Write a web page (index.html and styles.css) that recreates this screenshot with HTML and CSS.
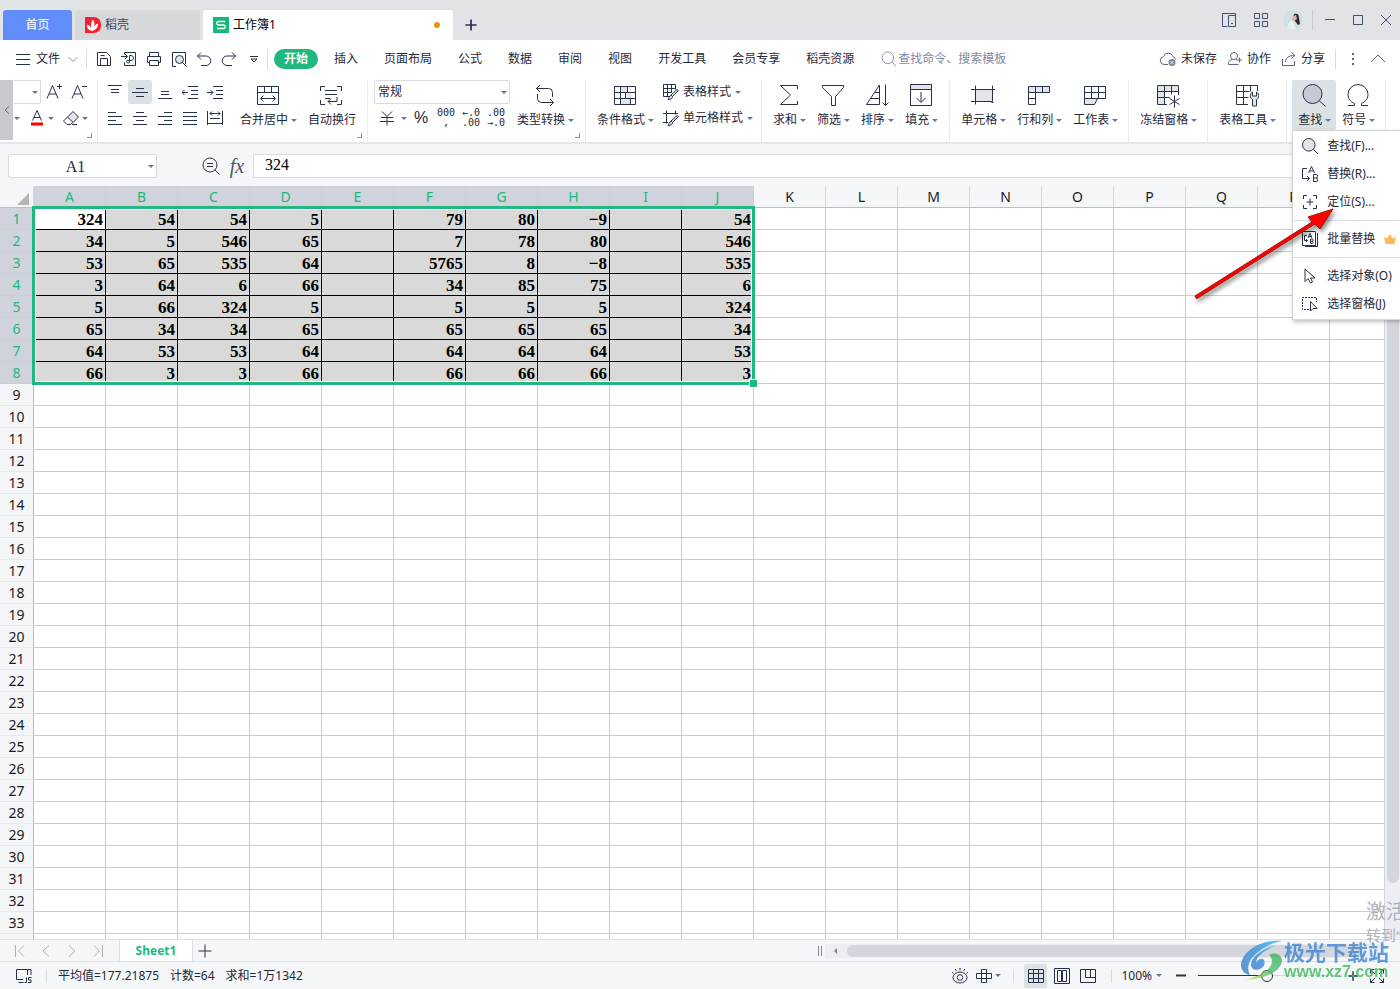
FILE: index.html
```html
<!DOCTYPE html>
<html lang="zh-CN">
<head>
<meta charset="utf-8">
<title>工作簿1</title>
<link rel="stylesheet" href="styles.css">
</head>
<body>
<svg class="sprite" aria-hidden="true">
  <symbol id="i-burger" viewBox="0 0 16 16"><path d="M1 3.500h14M1 8.500h14M1 13.500h14"/></symbol>
  <symbol id="i-chev" viewBox="0 0 12 12"><path d="M1.500 4l4.500 4.500 4.500-4.500"/></symbol>
  <symbol id="i-chevup" viewBox="0 0 16 16"><path d="M1 11l7-7 7 7"/></symbol>
  <symbol id="i-save" viewBox="0 0 16 16"><path d="M1.500 1.500h9l4 4v9h-13zM4.500 14.500v-7h7v7M4.500 4.500h4"/></symbol>
  <symbol id="i-export" viewBox="0 0 16 16"><path d="M3.500 3.500v-2h11v13h-11v-3M0 5.500h6M4 3l2.500 2.500L4 8M8.500 11V4.500h1.500a2.300 2.300 0 0 1 0 5H6a1.500 1.500 0 1 0 2.500 1.500"/></symbol>
  <symbol id="i-print" viewBox="0 0 16 16"><path d="M3.500 5V1.500h9V5M3.500 11.500h-2v-6h13v6h-2M3.500 9.500h9v5h-9z"/></symbol>
  <symbol id="i-preview" viewBox="0 0 16 16"><path d="M5 15.500H1.500v-14h13V13"/><circle cx="8.500" cy="8.500" r="4" class="tint"/><path d="M11.500 11.500l4 4"/></symbol>
  <symbol id="i-undo" viewBox="0 0 16 16"><path d="M5 1.500L1.500 5 5 8.500M1.500 5H10a4.700 4.700 0 0 1 0 9.500H5"/></symbol>
  <symbol id="i-redo" viewBox="0 0 16 16"><path d="M11 1.500L14.500 5 11 8.500M14.500 5H6a4.700 4.700 0 0 0 0 9.500h5"/></symbol>
  <symbol id="i-more" viewBox="0 0 10 10"><path d="M1 2.500h8M2 5l3 3 3-3z"/></symbol>
  <symbol id="i-search" viewBox="0 0 16 16"><circle cx="6.800" cy="6.800" r="5.800"/><path d="M11 11l4 4"/></symbol>
  <symbol id="i-searchf" viewBox="0 0 16 16"><circle cx="6.800" cy="6.800" r="6.300" class="tint"/><path d="M11.500 11.500l4.500 4.500"/></symbol>
  <symbol id="i-cloud" viewBox="0 0 18 16"><path d="M9 13.500H5a4 4 0 0 1-.5-7.900A5 5 0 0 1 14 5.500a4 4 0 0 1 2.400 3"/><circle cx="13" cy="11.500" r="3.500" class="dot"/><path class="white" d="M11.800 10.300l2.400 2.400M14.200 10.300l-2.400 2.400"/></symbol>
  <symbol id="i-user" viewBox="0 0 16 16"><circle cx="7" cy="5" r="3.500"/><path d="M5 8.500C2 9 1.500 11 1.500 13.500h10M9 8.500l1 .7M12.500 6.500v5M10 9h5"/></symbol>
  <symbol id="i-share" viewBox="0 0 16 16"><path d="M1.500 8v6.500h12V10M4.500 11c0-4 3-6.500 9-6.500M10.500 1.500l3.500 3-3.500 3"/></symbol>
  <symbol id="i-pane" viewBox="0 0 16 16"><path d="M6.500 14.500h-5v-13h13v2M7.500 3.500h7v11h-7zM10 11.500h2"/></symbol>
  <symbol id="i-four" viewBox="0 0 16 16"><path d="M1.500 1.500h5v5h-5zM9.500 1.500h5v5h-5zM1.500 9.500h5v5h-5zM9.500 9.500h5v5h-5z"/></symbol>
  <symbol id="i-min" viewBox="0 0 12 12"><path d="M1 5.500h10"/></symbol>
  <symbol id="i-max" viewBox="0 0 12 12"><path d="M1.500 1.500h9v9h-9z"/></symbol>
  <symbol id="i-close" viewBox="0 0 12 12"><path d="M1 1l10 10M11 1L1 11"/></symbol>
  <symbol id="i-plus" viewBox="0 0 14 14"><path d="M7 .5v13M.5 7h13"/></symbol>
  <symbol id="i-abig" viewBox="0 0 16 16"><path d="M1 14.500L6.500 1.500 12 14.500M3 10h7M13.500 0v5M11 2.500h5"/></symbol>
  <symbol id="i-asmall" viewBox="0 0 16 16"><path d="M1 14.500L6.500 1.500 12 14.500M3 10h7M11 2.500h5"/></symbol>
  <symbol id="i-acolor" viewBox="0 0 16 16"><path d="M3.500 10.500L8 .5l4.500 10M5 7.500h6"/><path class="red" d="M2 14h12"/></symbol>
  <symbol id="i-eraser" viewBox="0 0 16 16"><path class="tint" d="M4.500 7l5.500-5.500 5.500 5.500-5.500 5.500z"/><path d="M4.500 7L.5 11l3.500 3.500h3l3-2M9 14.500h5"/></symbol>
  <symbol id="i-top" viewBox="0 0 16 16"><path d="M1 1.500h14M4 5.500h8M4 8.500h8"/></symbol>
  <symbol id="i-mid" viewBox="0 0 16 16"><path d="M4 4.500h8M0 8.500h16M4 12.500h8"/></symbol>
  <symbol id="i-bot" viewBox="0 0 16 16"><path d="M4 7.500h8M4 10.500h8M1 14.500h14"/></symbol>
  <symbol id="i-outd" viewBox="0 0 16 16"><path d="M6 2.500h10M9 6.500h7M9 10.500h7M6 14.500h10M0 8.500h6M2.500 6L0 8.500 2.500 11"/></symbol>
  <symbol id="i-ind" viewBox="0 0 16 16"><path d="M6 2.500h10M9 6.500h7M9 10.500h7M6 14.500h10M0 8.500h6M3.500 6L6 8.500 3.500 11"/></symbol>
  <symbol id="i-left" viewBox="0 0 16 16"><path d="M1 2.500h8M1 6.500h14M1 10.500h8M1 14.500h14"/></symbol>
  <symbol id="i-center" viewBox="0 0 16 16"><path d="M4 2.500h8M1 6.500h14M4 10.500h8M1 14.500h14"/></symbol>
  <symbol id="i-right" viewBox="0 0 16 16"><path d="M7 2.500h8M1 6.500h14M7 10.500h8M1 14.500h14"/></symbol>
  <symbol id="i-just" viewBox="0 0 16 16"><path d="M1 2.500h14M1 6.500h14M1 10.500h14M1 14.500h14"/></symbol>
  <symbol id="i-dist" viewBox="0 0 16 16"><path d="M.5 1v14M15.500 1v14M3 3.500h10M5 1.500l-2 2 2 2M11 1.500l2 2-2 2M3 8.500h10M1 13.500h14"/></symbol>
  <symbol id="i-merge" viewBox="0 0 24 24"><path d="M1.500 2.500h21v18h-21zM1.500 8.500h21M8.500 2.500v6M15.500 2.500v6M4.500 14.500h15M7.500 11.500l-3 3 3 3M16.500 11.500l3 3-3 3"/></symbol>
  <symbol id="i-wrap" viewBox="0 0 24 24"><path d="M6 2.500H1.500V7M18 2.500h4.500V7M6 20.500H1.500V16M18 20.500h4.500V16M6 6.500h12M6 10.500h12M6 14.500h5M18 13v4.500H9M12 14.500l-3 3 3 3"/></symbol>
  <symbol id="i-yen" viewBox="0 0 16 16"><path d="M3 1.500l5 5 5-5M2 7.500h12M1 11.500h14M8 6.500v9"/></symbol>
  <symbol id="i-conv" viewBox="0 0 24 24"><path d="M7 1L3.500 4.500 7 8M3.500 4.500h12a4 4 0 0 1 4 4V13M17 15l3.500 3.500L17 22M20.500 18.500h-12a4 4 0 0 1-4-4V10"/></symbol>
  <symbol id="i-cond" viewBox="0 0 24 24"><path class="tint nos" d="M7 2h7v6H7zM7 14h10v6H7zM14 8h4v6h-4z"/><path d="M1.500 2.500h21v18h-21zM1.500 8.500h21M1.500 14.500h21M7.500 2.500v6M14.500 2.500v6M7.500 14.500v6M17.500 14.500v6M12.500 8.500v6M7.500 8.500v6"/></symbol>
  <symbol id="i-tstyle" viewBox="0 0 16 16"><path d="M6 12.500H.5v-12h12v5M.5 4.500h12M.5 8.500h8M4.500.5v12M8.500.5v8"/><path class="tint" d="M15.500 6.500l-6 6-1.500-1.500 6-5.500zM8 11.500c-2 0-2 3-3 4 3 0 4.500-1 4.500-3"/></symbol>
  <symbol id="i-cstyle" viewBox="0 0 16 16"><path d="M0 3.500h15M3.500.5v13M0 12.500h5M12.500.5v4"/><path class="tint" d="M15.500 6.500l-6 6-1.500-1.500 6-5.500zM8 11.500c-2 0-2 3-3 4 3 0 4.500-1 4.500-3"/></symbol>
  <symbol id="i-sum" viewBox="0 0 24 24"><path d="M20.500 5V1.500h-17l10 9.500-10 9.500h17V17"/></symbol>
  <symbol id="i-filter" viewBox="0 0 24 24"><path d="M1.500 1.500h21v2l-8 9v9h-4v-9l-9-9z"/></symbol>
  <symbol id="i-sort" viewBox="0 0 24 24"><path d="M14.500 1L1.500 20.500h13zM14.500 8.500H9.500M14.500 14.500H5.500M20.500 .5v21M17.500 18.500l3 3 3-3"/></symbol>
  <symbol id="i-fill" viewBox="0 0 24 24"><path class="tint" d="M1.500 .5h21v5h-21z"/><path d="M1.500 5.500v16h21v-16M12 8v10M7.500 14l4.500 4.500 4.500-4.500"/></symbol>
  <symbol id="i-cell" viewBox="0 0 24 24"><path class="tint" d="M4.500 5.500h17v12h-17z"/><path d="M0 5.500h24M0 17.500h19M4.500 1.500v19M21.500 1.500v14M20.500 18.500h2"/></symbol>
  <symbol id="i-rowcol" viewBox="0 0 24 24"><path class="tint" d="M1.500 2.500h21v6h-21z"/><path d="M1.500 8.500v12h7v-18M15.500 2.500v6M1.500 14.500h7"/></symbol>
  <symbol id="i-wsheet" viewBox="0 0 24 24"><path d="M1.500 2.500h21v12h-21zM1.500 8.500h21M8.500 2.500v12M15.500 2.500v12"/><path class="tint" d="M1.500 14.500h13l-3 6h-10z"/></symbol>
  <symbol id="i-freeze" viewBox="0 0 24 24"><path class="tint nos" d="M1 2h22v6H8v12H1z"/><path d="M11 20.500H1.500v-19h21V11M1.500 7.500h21M1.500 13.500h12M8.500 1.500v19M15.500 1.500v9M18.500 11.500v12M13.500 14.500l10 6M23.500 14.500l-10 6"/></symbol>
  <symbol id="i-tools" viewBox="0 0 24 24"><path d="M13 20.500H1.500v-19h21V7M1.500 7.500h13M1.500 13.500h12M8.500 1.500v19M15.500 1.500v6"/><path class="tint" d="M17.500 8v4h4V8c3 2 3 6 0 7.500v6.500h-4v-6.500C14.500 14 14.500 10 17.500 8z"/></symbol>
  <symbol id="i-find" viewBox="0 0 24 24"><circle cx="10.500" cy="10" r="9.500" class="tint2"/><path d="M17 16.500l6.500 6"/></symbol>
  <symbol id="i-omega" viewBox="0 0 24 24"><path d="M2 21.500h6.500v-2C4 17.500 2 14 2 10.500a10 10 0 0 1 20 0c0 3.500-2 7-6.500 9v2H22"/></symbol>
  <symbol id="i-repl" viewBox="0 0 16 16"><path d="M5 2.500H.5v10H7M5 10l2.500 2.500L5 15M6.500 7l3-6.500 3 6.500M7.500 5h4M11.500 8.500v7H14a1.700 1.700 0 0 0 0-3.500h-2.500M14 12a1.700 1.700 0 0 0 0-3.500h-2.500"/></symbol>
  <symbol id="i-goto" viewBox="0 0 16 16"><path d="M5 1.500H1.500V5M11 1.500h3.500V5M5 14.500H1.500V11M11 14.500h3.500V11M4.500 8h7M8 4.500v7"/></symbol>
  <symbol id="i-batch" viewBox="0 0 16 16"><path d="M.5 .5h13v14H.5zM15.500 2v13.500H3M5 4.500H2.500v5H5M4 8l1.500 1.500L4 11M6 7l2-4.500L10 7M6.500 5.500h3M8.500 8v4.500h1.500a1 1 0 0 0 0-2.200H8.500M10 10.300A1 1 0 0 0 10 8H8.500"/></symbol>
  <symbol id="i-cursor" viewBox="0 0 16 16"><path d="M3 1v12.500l3-3 2.500 4.500 2-1-2-4h4.500z"/></symbol>
  <symbol id="i-selpane" viewBox="0 0 16 16"><path class="dash" d="M7 13.500H.5v-12h14V6"/><path d="M8.500 5.500v9.500l2.500-2.500h4z"/></symbol>
  <symbol id="i-zoomf" viewBox="0 0 18 18"><circle cx="8" cy="8" r="7"/><path d="M13 13l4.500 4.500M5 6.500h6M5 9.500h6"/></symbol>
  <symbol id="i-first" viewBox="0 0 12 12"><path d="M1.500 0v12M10 .5L4.500 6l5.500 5.500"/></symbol>
  <symbol id="i-prev" viewBox="0 0 12 12"><path d="M9 .5L3 6l6 5.500"/></symbol>
  <symbol id="i-next" viewBox="0 0 12 12"><path d="M3 .5L9 6l-6 5.500"/></symbol>
  <symbol id="i-last" viewBox="0 0 12 12"><path d="M10.500 0v12M2 .5L7.500 6 2 11.500"/></symbol>
  <symbol id="i-macro" viewBox="0 0 18 18"><path d="M8 12.500H1.500v-10h11M3.500 15.500h5M12.500 8V2.500h3.500V8M11.500 10.500v5h-2M16.500 10.500h-3v2.500h2.500v2.500h-3"/></symbol>
  <symbol id="i-eye" viewBox="0 0 16 16"><ellipse cx="8" cy="9.500" rx="7" ry="5.500"/><circle cx="8" cy="9.500" r="2.800"/><path d="M8 0v2.500M3 1l1.500 2M13 1l-1.500 2M0 4l1.500 1.500M16 4l-1.500 1.500"/></symbol>
  <symbol id="i-cross" viewBox="0 0 16 16"><path d="M5.500 1.500h5v13h-5zM.5 5.500h15v5H.5z"/></symbol>
  <symbol id="i-grid" viewBox="0 0 16 16"><path d="M.5 1.500h15v13H.5zM.5 5.500h15M.5 10.500h15M5.500 1.500v13M10.500 1.500v13"/></symbol>
  <symbol id="i-page" viewBox="0 0 16 16"><path d="M.5.5h15v15H.5zM3.500 2.500h4v11h-4zM8.500 2.500h4v11h-4z"/></symbol>
  <symbol id="i-break" viewBox="0 0 16 16"><path d="M.5 1.500h15v13H.5zM5.500 1.500v8h10M10.500 1.500v8"/></symbol>
  <symbol id="i-full" viewBox="0 0 16 16"><path d="M5.500 1.500h-4v4M10.500 1.500h4v4M5.500 14.500h-4v-4M10.500 14.500h4v-4M1.500 1.500L6 6M14.500 1.500L10 6M1.500 14.500L6 10M14.500 14.500L10 10"/></symbol>
</svg>

<div class="app">
  <header class="titlebar">
    <button class="tab tab-home">首页</button>
    <button class="tab tab-doc">
      <svg class="logo" viewBox="0 0 16 16"><path fill="#f5222d" d="M0 0h9a7 7 0 0 1 7 7v2a7 7 0 0 1-7 7H0z"/><path fill="#fff" d="M7 14C3 13 1.500 10.500 2 7.500 4.500 8.500 6 10 6.500 11.500 5.500 8 6 4.500 8 2.500c2 2.500 1.800 5.500.3 9 .7-2.500 2.200-4.500 4.700-5C13.500 10 11 13 7 14z"/></svg>
      <span>稻壳</span>
    </button>
    <button class="tab tab-active">
      <svg class="logo" viewBox="0 0 16 16"><path fill="#14b878" d="M0 0h16v16H0z"/><path fill="none" stroke="#fff" stroke-width="1.300" d="M12 4.500H5.500a1.700 1.700 0 0 0 0 3.500h5a1.700 1.700 0 0 1 0 3.500H4"/></svg>
      <span>工作簿1</span><i class="unsaved"></i>
    </button>
    <button class="icon-btn new-tab" aria-label="新建"><svg class="ico s12 thick"><use href="#i-plus"/></svg></button>
    <div class="window-tools">
      <button class="icon-btn" aria-label="并排"><svg class="ico s16"><use href="#i-pane"/></svg></button>
      <button class="icon-btn" aria-label="应用"><svg class="ico s16"><use href="#i-four"/></svg></button>
      <svg class="avatar" viewBox="0 0 20 20"><circle cx="10" cy="10" r="10" fill="#cfdfe3"/><path fill="#e6f0f2" d="M4 18c1-5 3-7 6-7l3 8a10 10 0 0 1-9-1z"/><path fill="#2c2a35" d="M11 4c3-1 5 0 5 4l1 6-2 1-3-4-2-2z"/><path fill="#dbb3a0" d="M10 6l3-1 1 4-3 2-2-1z"/></svg>
      <i class="sep"></i>
      <button class="icon-btn" aria-label="最小化"><svg class="ico s12"><use href="#i-min"/></svg></button>
      <button class="icon-btn" aria-label="最大化"><svg class="ico s12"><use href="#i-max"/></svg></button>
      <button class="icon-btn" aria-label="关闭"><svg class="ico s12"><use href="#i-close"/></svg></button>
    </div>
  </header>

  <nav class="menubar">
    <button class="file"><svg class="ico s16"><use href="#i-burger"/></svg><span>文件</span><svg class="ico s12 muted"><use href="#i-chev"/></svg></button>
    <i class="sep"></i>
    <div class="quick">
      <button class="icon-btn" aria-label="保存"><svg class="ico s16"><use href="#i-save"/></svg></button>
      <button class="icon-btn" aria-label="输出"><svg class="ico s16"><use href="#i-export"/></svg></button>
      <button class="icon-btn" aria-label="打印"><svg class="ico s16"><use href="#i-print"/></svg></button>
      <button class="icon-btn" aria-label="预览"><svg class="ico s16"><use href="#i-preview"/></svg></button>
      <button class="icon-btn" aria-label="撤销"><svg class="ico s16"><use href="#i-undo"/></svg></button>
      <button class="icon-btn" aria-label="恢复"><svg class="ico s16"><use href="#i-redo"/></svg></button>
      <button class="icon-btn" aria-label="更多"><svg class="ico s10"><use href="#i-more"/></svg></button>
    </div>
    <i class="sep"></i>
    <div class="menu-tabs">
      <button class="current">开始</button><button>插入</button><button>页面布局</button><button>公式</button><button>数据</button><button>审阅</button><button>视图</button><button>开发工具</button><button>会员专享</button><button>稻壳资源</button>
    </div>
    <label class="search"><svg class="ico s16"><use href="#i-search"/></svg><input type="text" placeholder="查找命令、搜索模板" aria-label="查找命令"></label>
    <div class="menu-right">
      <button><svg class="ico cloud"><use href="#i-cloud"/></svg>未保存</button>
      <button><svg class="ico s16"><use href="#i-user"/></svg>协作</button>
      <button><svg class="ico s16"><use href="#i-share"/></svg>分享</button>
      <i class="sep"></i>
      <button class="dots" aria-label="更多"><i></i><i></i><i></i></button>
      <button class="collapse" aria-label="收起"><svg class="ico s16"><use href="#i-chevup"/></svg></button>
    </div>
  </nav>

  <section class="ribbon">
    <button class="ribbon-prev" aria-label="向左"><svg class="ico s8"><use href="#i-prev"/></svg></button>
    <div class="group group-font">
      <div class="rows">
        <div class="row"><span class="pick pick-size"><select aria-label="字号"><option></option></select></span>
          <button class="tool" aria-label="增大字号"><svg class="ico s16"><use href="#i-abig"/></svg></button>
          <button class="tool" aria-label="减小字号"><svg class="ico s16"><use href="#i-asmall"/></svg></button></div>
        <div class="row row-font"><i class="caret"></i><button class="split" aria-label="字体颜色"><svg class="ico s16"><use href="#i-acolor"/></svg><i class="caret"></i></button>
          <button class="split" aria-label="清除"><svg class="ico s16"><use href="#i-eraser"/></svg><i class="caret"></i></button></div>
      </div><i class="corner"></i>
    </div>
    <div class="group group-align">
      <div class="align">
        <button class="tool" aria-label="顶端对齐"><svg class="ico s16"><use href="#i-top"/></svg></button>
        <button class="tool on" aria-label="垂直居中"><svg class="ico s16"><use href="#i-mid"/></svg></button>
        <button class="tool" aria-label="底端对齐"><svg class="ico s16"><use href="#i-bot"/></svg></button>
        <button class="tool" aria-label="减少缩进"><svg class="ico s16"><use href="#i-outd"/></svg></button>
        <button class="tool" aria-label="增加缩进"><svg class="ico s16"><use href="#i-ind"/></svg></button>
        <button class="tool" aria-label="左对齐"><svg class="ico s16"><use href="#i-left"/></svg></button>
        <button class="tool" aria-label="居中"><svg class="ico s16"><use href="#i-center"/></svg></button>
        <button class="tool" aria-label="右对齐"><svg class="ico s16"><use href="#i-right"/></svg></button>
        <button class="tool" aria-label="两端对齐"><svg class="ico s16"><use href="#i-just"/></svg></button>
        <button class="tool" aria-label="分散对齐"><svg class="ico s16"><use href="#i-dist"/></svg></button>
      </div>
      <button class="big"><svg class="ico s24"><use href="#i-merge"/></svg><span>合并居中<i class="caret"></i></span></button>
      <button class="big"><svg class="ico s24"><use href="#i-wrap"/></svg><span>自动换行</span></button><i class="corner"></i>
    </div>
    <div class="group group-num">
      <div class="rows rows-num">
        <span class="pick"><select aria-label="数字格式"><option>常规</option></select></span>
        <div class="row row-num">
          <button class="split" aria-label="货币"><svg class="ico s16"><use href="#i-yen"/></svg><i class="caret"></i></button>
          <button class="tool pct">%</button>
          <button class="tool num"><span>000</span><span>,</span></button>
          <button class="tool num"><span>←.0</span><span>.00</span></button>
          <button class="tool num"><span>.00</span><span>→.0</span></button>
        </div>
      </div>
      <button class="big"><svg class="ico s24"><use href="#i-conv"/></svg><span>类型转换<i class="caret"></i></span></button><i class="corner"></i>
    </div>
    <div class="group group-style">
      <button class="big"><svg class="ico s24"><use href="#i-cond"/></svg><span>条件格式<i class="caret"></i></span></button>
      <div class="rows">
        <button class="small"><svg class="ico s16"><use href="#i-tstyle"/></svg>表格样式<i class="caret"></i></button>
        <button class="small"><svg class="ico s16"><use href="#i-cstyle"/></svg>单元格样式<i class="caret"></i></button>
      </div>
    </div>
    <div class="group group-data">
      <button class="big"><svg class="ico s24"><use href="#i-sum"/></svg><span>求和<i class="caret"></i></span></button>
      <button class="big"><svg class="ico s24"><use href="#i-filter"/></svg><span>筛选<i class="caret"></i></span></button>
      <button class="big"><svg class="ico s24"><use href="#i-sort"/></svg><span>排序<i class="caret"></i></span></button>
      <button class="big"><svg class="ico s24"><use href="#i-fill"/></svg><span>填充<i class="caret"></i></span></button>
    </div>
    <div class="group">
      <button class="big"><svg class="ico s24"><use href="#i-cell"/></svg><span>单元格<i class="caret"></i></span></button>
      <button class="big"><svg class="ico s24"><use href="#i-rowcol"/></svg><span>行和列<i class="caret"></i></span></button>
      <button class="big"><svg class="ico s24"><use href="#i-wsheet"/></svg><span>工作表<i class="caret"></i></span></button>
    </div>
    <div class="group"><button class="big"><svg class="ico s24"><use href="#i-freeze"/></svg><span>冻结窗格<i class="caret"></i></span></button></div>
    <div class="group"><button class="big"><svg class="ico s24"><use href="#i-tools"/></svg><span>表格工具<i class="caret"></i></span></button></div>
    <div class="group">
      <div class="dropdown">
        <button class="big on"><svg class="ico s24"><use href="#i-find"/></svg><span>查找<i class="caret"></i></span></button>
        <div class="menu">
          <button><svg class="ico s16"><use href="#i-searchf"/></svg>查找(F)...</button>
          <button><svg class="ico s16"><use href="#i-repl"/></svg>替换(R)...</button>
          <button><svg class="ico s16"><use href="#i-goto"/></svg>定位(S)...</button>
          <hr>
          <button><svg class="ico s16"><use href="#i-batch"/></svg>批量替换<svg class="crown" viewBox="0 0 12 10"><path fill="#ffb85c" d="M0 2.500l3 2L6 0l3 4.500 3-2L10.500 10h-9z"/></svg></button>
          <hr>
          <button><svg class="ico s16"><use href="#i-cursor"/></svg>选择对象(O)</button>
          <button><svg class="ico s16"><use href="#i-selpane"/></svg>选择窗格(J)</button>
          <svg class="arrow" viewBox="0 0 150 100"><path fill="#f00" stroke="#a01010" d="M6 93L5 91 122 17l-4-5 25-8-13 20-5-5L7 93.500z"/></svg>
        </div>
      </div>
      <button class="big"><svg class="ico s24"><use href="#i-omega"/></svg><span>符号<i class="caret"></i></span></button>
    </div>
  </section>

  <section class="formula">
    <span class="pick pick-name"><input type="text" value="A1" aria-label="名称框"></span>
    <div class="fx-tools">
      <button class="icon-btn" aria-label="浏览公式"><svg class="ico s18"><use href="#i-zoomf"/></svg></button>
      <button class="icon-btn fx">fx</button>
    </div>
    <input class="fx-input" type="text" value="324" aria-label="编辑栏">
  </section>

  <main class="sheet">
    <div class="cells">
      <table id="grid"></table>
      <div class="selection"></div>
    </div>
    <div class="vscroll"><i></i></div>
  </main>

  <section class="sheetbar">
    <div class="sheet-nav">
      <button class="icon-btn" aria-label="第一张"><svg class="ico s12"><use href="#i-first"/></svg></button>
      <button class="icon-btn" aria-label="上一张"><svg class="ico s12"><use href="#i-prev"/></svg></button>
      <button class="icon-btn" aria-label="下一张"><svg class="ico s12"><use href="#i-next"/></svg></button>
      <button class="icon-btn" aria-label="最后一张"><svg class="ico s12"><use href="#i-last"/></svg></button>
    </div>
    <button class="sheet-tab">Sheet1</button>
    <button class="icon-btn add" aria-label="添加工作表"><svg class="ico s14"><use href="#i-plus"/></svg></button>
    <div class="hscroll"><b></b><div class="track"><i></i></div></div>
  </section>

  <footer class="status">
    <button class="icon-btn macro" aria-label="宏"><svg class="ico s18"><use href="#i-macro"/></svg></button>
    <i class="sep"></i>
    <div class="stats"><span>平均值=177.21875</span><span>计数=64</span><span>求和=1万1342</span></div>
    <div class="views">
      <button class="icon-btn" aria-label="护眼"><svg class="ico s16"><use href="#i-eye"/></svg></button>
      <button class="split reading" aria-label="阅读模式"><svg class="ico s16"><use href="#i-cross"/></svg><i class="caret"></i></button>
      <i class="sep"></i>
      <button class="view on" aria-label="普通视图"><svg class="ico s16"><use href="#i-grid"/></svg></button>
      <button class="view" aria-label="页面布局"><svg class="ico s16"><use href="#i-page"/></svg></button>
      <button class="view" aria-label="分页预览"><svg class="ico s16"><use href="#i-break"/></svg></button>
      <i class="sep sep-zoom"></i>
      <button class="zoom-val">100%<i class="caret"></i></button>
      <button class="icon-btn" aria-label="缩小"><svg class="ico s12 thick"><use href="#i-min"/></svg></button>
      <input class="zoom" type="range" min="0" max="100" value="50" aria-label="缩放">
      <button class="icon-btn" aria-label="放大"><svg class="ico s10 thick"><use href="#i-plus"/></svg></button>
      <button class="icon-btn" aria-label="全屏"><svg class="ico s16"><use href="#i-full"/></svg></button>
    </div>
  </footer>
</div>

<div class="activate"><div class="act-title">激活</div><div class="act-sub">转到“</div></div>
<div class="brand">
  <svg viewBox="0 0 44 42"><defs><linearGradient id="gb" x1="0" y1="1" x2="1" y2="0"><stop offset="0" stop-color="#3a76c8"/><stop offset="1" stop-color="#35b5ef"/></linearGradient><linearGradient id="gg" x1="0" y1="1" x2="1" y2="0"><stop offset="0" stop-color="#dfe04a"/><stop offset=".5" stop-color="#4fbf6a"/><stop offset="1" stop-color="#3fae63"/></linearGradient></defs>
    <path fill="url(#gb)" d="M42 1C22-1 2 11 1 25c0 5 3 9 9 10-4-7-1-16 8-23C25 6 32 3 42 1z"/>
    <path fill="url(#gb)" d="M36 5C22 9 11 17 11 25c0 4 5 6 9 4 5-2 6-8 3-10-3-1-6 1-7 4 0-6 6-11 20-18z"/>
    <path fill="url(#gg)" d="M29 15c5-3 12-1 13 5 0 9-12 17-28 19l-9 1c14-4 26-10 27-18 0-3-1-5-3-7z"/></svg>
  <div><div class="brand-cn">极光下载站</div><div class="brand-url">www.xz7.com</div></div>
</div>
<script src="app.js"></script>
</body>
</html>
```
FILE: styles.css
```css
* { box-sizing: border-box; }
body {
  margin: 0;
  overflow: hidden;
  font: 12px/16px "Noto Sans", "Noto Sans CJK SC", sans-serif;
  color: #1f2937;
  background: #fff;
}
button, input, select { font: inherit; color: inherit; margin: 0; }
button { border: 0; padding: 0; background: none; white-space: nowrap; }
.sprite { position: absolute; width: 0; height: 0; }
.app { display: flex; flex-direction: column; height: 100vh; }

.ico { display: block; flex: none; fill: none; stroke: #273248; stroke-width: 1; overflow: visible; }
.s8 { width: 8px; height: 8px; }
.s10 { width: 10px; height: 10px; }
.s12 { width: 12px; height: 12px; }
.s14 { width: 14px; height: 14px; }
.s16 { width: 16px; height: 16px; }
.s18 { width: 18px; height: 18px; }
.s24 { width: 24px; height: 24px; }
.thick { stroke-width: 2; }
.muted { stroke: #8a90a0; }
.tint { fill: #e2e4e8; }
.tint2 { fill: #c5cad4; }
.nos { stroke: none; }
.red { stroke: #f00; stroke-width: 3; }
.dot { fill: #7d879c; stroke: none; }
.white { stroke: #fff; }
.dash { stroke-dasharray: 2 1; }
.sep { width: 1px; height: 20px; background: #d9dbe0; flex: none; }
.caret { display: inline-block; flex: none; border: 3px solid transparent; border-top-color: #6c7893; border-bottom: 0; }
.icon-btn { display: flex; align-items: center; justify-content: center; width: 24px; height: 22px; }

.titlebar { display: flex; align-items: flex-end; gap: 3px; height: 40px; flex: none; padding-left: 3px; background: #e1e3e7; }
.tab { display: flex; align-items: center; height: 30px; border-radius: 3px 3px 0 0; }
.tab-home { justify-content: center; width: 69px; background: #608dfa; color: #fff; }
.tab-doc { width: 125px; gap: 4px; padding-left: 10px; background: #d6d8dc; color: #3c4454; }
.tab-active { width: 250px; gap: 4px; padding: 0 13px 0 10px; background: #fff; color: #000; }
.logo { width: 16px; height: 16px; }
.unsaved { width: 6px; height: 6px; margin-left: auto; border-radius: 50%; background: #e6960a; }
.new-tab { height: 30px; width: 30px; }
.window-tools { display: flex; align-items: center; height: 40px; margin-left: auto; }
.window-tools .icon-btn { width: 28px; }
.window-tools .icon-btn:first-child { margin-right: 4px; }
.window-tools .ico { stroke: #42516e; }
.avatar { width: 20px; height: 20px; margin: 0 9px 0 8px; }
.window-tools .sep { background: #c8cbd2; margin-right: 3px; }

.menubar { display: flex; align-items: center; height: 38px; flex: none; padding-left: 15px; }
.file { display: flex; align-items: center; gap: 5px; margin-right: 7px; }
.file .muted { margin-left: 2px; }
.quick { display: flex; gap: 1px; padding: 0 1px 0 5px; }
.menu-tabs { display: flex; align-items: center; gap: 26px; padding-left: 6px; }
.current { height: 20px; padding: 0 10px; margin-right: -10px; border-radius: 10px; background: #21b87f; color: #fff; font-weight: 700; }
.search { display: flex; align-items: center; gap: 1px; margin-left: 27px; }
.search .ico { stroke: #8a97b5; }
.search input { width: 130px; border: 0; padding: 0; background: none; outline: 0; }
.search input::placeholder { color: #7f8ba6; opacity: 1; }
.menu-right { display: flex; align-items: center; gap: 10px; margin-left: auto; padding-right: 14px; }
.menu-right button { display: flex; align-items: center; gap: 4px; }
.menu-right .ico { stroke: #5a6680; }
.cloud { width: 18px; height: 16px; }
.menu-right .dots { flex-direction: column; gap: 3px; width: 14px; }
.dots i { width: 2px; height: 2px; background: #5a6680; }

.ribbon { display: flex; height: 66px; flex: none; padding-top: 2px; border-bottom: 2px solid #e4e6ea; }
.ribbon-prev { display: flex; align-items: center; justify-content: center; width: 13px; height: 60px; background: #c8cad0; }
.group { display: flex; position: relative; align-items: flex-start; flex: none; padding: 0 5px; border-right: 1px solid #eceef1; height: 62px; }
.group-font { padding: 0 5px 0 1px; width: 85px; }
.group-align .align { margin-right: 7px; }
.group-align, .group-data { padding-right: 6px; }
.group-num { padding-right: 6px; }
.group-num .rows, .group-style .rows { margin-right: 1px; margin-left: 1px; }
.rows { display: flex; flex-direction: column; gap: 2px; }
.row { display: flex; gap: 1px; }
.tool { display: flex; align-items: center; justify-content: center; width: 24px; height: 24px; border-radius: 2px; }
.on { background: #dce1e6; border-radius: 2px; }
.pick { display: block; position: relative; height: 24px; }
.pick select, .pick input { appearance: none; width: 100%; height: 24px; padding: 0 3px; border: 1px solid #d9dbe0; border-radius: 2px; background: #fff; outline: 0; }
.pick::after { content: ""; position: absolute; right: 3px; top: 11px; border: 3px solid transparent; border-top-color: #6c7893; border-bottom: 0; }
.pick-size { width: 27px; }
.pick-size select { border-left: 0; border-radius: 0 2px 2px 0; }
.row-font { align-items: center; gap: 9px; }
.split { display: flex; align-items: center; gap: 3px; height: 24px; }
.corner { position: absolute; right: 5px; bottom: 4px; width: 5px; height: 5px; border: solid #8d96ab; border-width: 0 1px 1px 0; }
.align { display: grid; grid-template-columns: repeat(5, 24px); gap: 2px 1px; }
.big { display: flex; flex-direction: column; align-items: center; gap: 4px; height: 50px; padding: 4px 5px 0 6px; }
.big span, .small { display: flex; align-items: center; }
.big .ico { margin-right: 2px; }
.big .caret { margin-left: 3px; }
.rows-num { width: 136px; }
.row-num { padding-left: 5px; }
.row-num .split { gap: 6px; }
.pct { font: 16px/20px "Liberation Sans", sans-serif; }
.row-num .pct { margin-left: 1px; }
.num { flex-direction: column; font: 10px/10px "DejaVu Sans Mono", monospace; }
.small { gap: 4px; height: 24px; padding: 0 2px 0 3px; }
.dropdown { position: relative; }
.menu { position: absolute; z-index: 5; left: 0; top: 50px; min-width: 116px; padding: 1px 0; background: #fff; border: 1px solid #d4d6da; box-shadow: 1px 2px 4px rgba(0, 0, 0, .25); }
.menu button { display: flex; align-items: center; gap: 9px; width: 100%; height: 28px; padding: 0 5px 0 9px; }
.menu hr { height: 1px; margin: 4px 0; border: 0; background: #dcdee3; }
.crown { width: 12px; height: 10px; }
.arrow { position: absolute; left: -103px; top: 74px; width: 150px; height: 100px; filter: drop-shadow(2px 3px 2px rgba(0, 0, 0, .45)); }

.formula { display: flex; align-items: center; height: 42px; flex: none; padding: 2px 0 0 8px; background: #f5f6f8; }
.pick-name { width: 149px; }
.pick-name input { padding: 2px 16px 0 2px; text-align: center; font: 16px/20px "Liberation Serif", serif; }
.fx-tools { display: flex; gap: 2px; padding: 0 4px 0 42px; }
.fx { font: italic 20px/20px "Liberation Serif", serif; color: #4a556b; }
.fx-input { flex: 1; height: 24px; padding: 0 11px 2px; border: 1px solid #d9dbe0; border-right: 0; border-radius: 2px; background: #fff; outline: 0; font: 16px/20px "Liberation Serif", serif; color: #000; }

.sheet { display: flex; flex: 1; min-height: 0; overflow: hidden; }
.cells { position: relative; flex: 1; min-width: 0; overflow: hidden; }
#grid { table-layout: fixed; width: 1402px; border-collapse: separate; border-spacing: 0; }
#grid th, #grid td { height: 22px; padding: 0; border: solid #c6cbda; border-width: 0 1px 1px 0; overflow: hidden; }
#grid th { background: #f5f6f8; font-size: 14px; line-height: 20px; font-weight: 400; color: #1b1b1b; }
#grid thead th { border-right-color: #d3d6e0; border-bottom-color: #b7bccf; }
#grid tbody th { border-right-color: #b3b8cc; border-bottom-color: #e8eaee; }
#grid .row-head { width: 34px; }
#grid .col-head { width: 72px; }
#grid th.sel { background: #d0d3db; color: #21b87f; border-color: #c9ced9; }
#grid td { text-align: right; }
#grid td.sel { padding: 2px 2px 0 0; background: #d9d9d9; border-color: #000; font: 700 17px/19px "Liberation Serif", serif; color: #000; }
#grid td.active { background: #fff; }
.all { width: 0; height: 0; margin: 4px 4px 0 auto; border: 6px solid transparent; border-right-color: #b5b5b5; border-bottom-color: #b5b5b5; }
.selection { position: absolute; left: 32px; top: 20px; width: 723px; height: 179px; border: 3px solid #21b87f; box-shadow: inset 0 0 0 1px #fff; }
.selection::after { content: ""; position: absolute; right: -5px; bottom: -5px; width: 7px; height: 7px; background: #21b87f; border: solid #fff; border-width: 1px 0 0 1px; }
.vscroll { width: 16px; padding: 22px 1px 56px 2px; background: #eceef3; border-left: 1px solid #d3d6e0; }
.vscroll i { display: block; height: 100%; border-radius: 7px; background: #d4d6dd; }

.sheetbar { display: flex; height: 23px; flex: none; background: #f5f6f8; border: solid #dcdfe4; border-width: 1px 0; }
.sheet-nav { display: flex; gap: 2px; padding: 0 9px 0 8px; }
.sheet-nav .ico { stroke: #a9aeba; }
.sheet-tab { width: 74px; background: #fff; border: solid #dcdfe4; border-width: 0 1px; color: #21b87f; font-weight: 700; }
.hscroll { display: flex; align-items: center; gap: 3px; flex: 1; margin-left: 601px; padding-right: 14px; }
.hscroll b { width: 4px; height: 10px; border: solid #7d879c; border-width: 0 1px; }
.track { display: flex; align-items: center; gap: 10px; flex: 1; height: 14px; padding: 0 24px 0 9px; background: #eceef3; }
.track::before { content: ""; border: 3px solid transparent; border-right-color: #7d879c; border-left: 0; }
.track i { flex: 1; height: 12px; border-radius: 6px; background: #d4d6dd; }

.status { display: flex; align-items: center; height: 27px; flex: none; padding: 0 11px 0 12px; background: #f5f6f8; }
.macro { margin-right: 10px; }
.status .sep { height: 14px; }
.stats { display: flex; gap: 11px; margin-left: 11px; }
.views { display: flex; align-items: center; margin-left: auto; }
.views > .sep { margin: 0 10px 0 12px; }
.views > .sep-zoom { margin: 0 9px; }
.reading { margin-left: 4px; }
.view { display: flex; align-items: center; justify-content: center; width: 23px; height: 24px; margin-right: 3px; }
.zoom-val { display: flex; align-items: center; gap: 4px; margin-right: 7px; }
.zoom { appearance: none; width: 138px; height: 14px; margin: 0 5px; background: linear-gradient(90deg, #273248 50%, #d4d6dd 50%) center / 100% 1px no-repeat; }
.zoom::-webkit-slider-thumb { appearance: none; width: 12px; height: 12px; border: 1px solid #273248; border-radius: 50%; background: #f5f6f8; }

.activate { position: absolute; right: 0; bottom: 44px; width: 34px; overflow: hidden; white-space: nowrap; color: #b0b2b8; pointer-events: none; }
.act-title { font-size: 20px; line-height: 26px; }
.act-sub { font-size: 15px; line-height: 20px; }
.brand { position: absolute; right: 11px; bottom: 7px; display: flex; align-items: center; opacity: .8; pointer-events: none; }
.brand svg { width: 44px; height: 42px; }
.brand-cn { color: #3f86cf; font: 700 21px/22px "Noto Sans CJK SC", sans-serif; }
.brand-url { color: #3fba5c; font: 700 16px/20px "Liberation Sans", sans-serif; }
```
FILE: app.js
```js
const rows = [
  [324, 54, 54, 5, "", 79, 80, "−9", "", 54],
  [34, 5, 546, 65, "", 7, 78, 80, "", 546],
  [53, 65, 535, 64, "", 5765, 8, "−8", "", 535],
  [3, 64, 6, 66, "", 34, 85, 75, "", 6],
  [5, 66, 324, 5, "", 5, 5, 5, "", 324],
  [65, 34, 34, 65, "", 65, 65, 65, "", 34],
  [64, 53, 53, 64, "", 64, 64, 64, "", 53],
  [66, 3, 3, 66, "", 66, 66, 66, "", 3]
];
const letters = "ABCDEFGHIJKLMNOPQRS".split("");
const fullRows = 33;
let html = '<thead><tr><th class="row-head"><div class="all"></div></th>';
letters.forEach((l, c) => { html += `<th class="col-head${c < 10 ? " sel" : ""}">${l}</th>`; });
html += "</tr></thead><tbody>";
for (let r = 0; r <= fullRows; r++) {
  html += `<tr><th${r < 8 ? ' class="sel"' : ""}>${r < fullRows ? r + 1 : ""}</th>`;
  letters.forEach((l, c) => {
    const inside = r < 8 && c < 10;
    const cls = inside ? (r + c === 0 ? "sel active" : "sel") : "";
    html += `<td class="${cls}">${inside ? rows[r][c] : ""}</td>`;
  });
  html += "</tr>";
}
document.getElementById("grid").innerHTML = html + "</tbody>";
```
